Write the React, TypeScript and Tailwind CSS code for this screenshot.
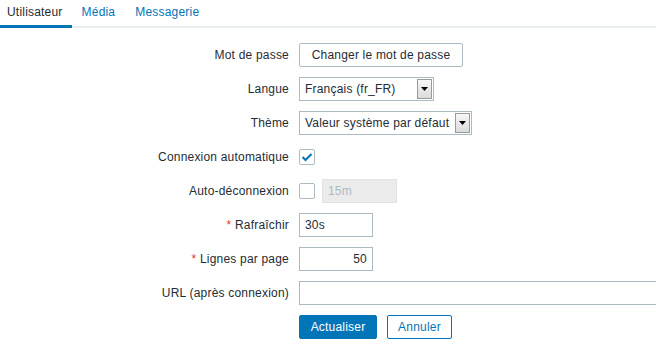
import React from "react";

function Arrow() {
  return (
    <div className="flex h-[20px] w-[15px] items-center justify-center border border-[#9a9a9a] bg-gradient-to-b from-[#f6f6f6] to-[#dcdcdc]">
      <svg width="7" height="4" viewBox="0 0 7 4">
        <path d="M0 0 L7 0 L3.5 4 Z" fill="#000" />
      </svg>
    </div>
  );
}

function Select({ value, width }: { value: string; width: string }) {
  return (
    <div className={`flex h-[24px] items-center justify-between border border-[#acbbc2] bg-white pl-[5px] pr-[1px] ${width}`}>
      <span className="whitespace-nowrap">{value}</span>
      <Arrow />
    </div>
  );
}

function Row({ label, required, children }: { label: string; required?: boolean; children: React.ReactNode }) {
  return (
    <div className="flex h-[24px] items-center">
      <div className="w-[289px] shrink-0 text-right whitespace-nowrap">
        {required && <span className="text-[#e33734]">* </span>}
        {label}
      </div>
      <div className="ml-[10px] flex min-w-0 flex-1 items-center">{children}</div>
    </div>
  );
}

export default function App() {
  return (
    <div className="h-[350px] w-[656px] overflow-hidden bg-white font-['Liberation_Sans',Arial,sans-serif] text-[12px] tracking-[0.2px] text-[#1f2c33]">
      <div className="flex border-b-2 border-[#ebeef0]">
        <div className="-mb-[2px] h-[28px] border-b-[3px] border-[#0275b8] pl-[7px] pr-[9px] leading-[25px] text-[#1f2c33]">
          Utilisateur
        </div>
        <div className="-mb-[2px] h-[28px] px-[10px] leading-[25px] text-[#0275b8]">Média</div>
        <div className="-mb-[2px] h-[28px] px-[10px] leading-[25px] text-[#0275b8]">Messagerie</div>
      </div>

      <div className="flex flex-col gap-[10px] pt-[15px]">
        <Row label="Mot de passe">
          <div className="flex h-[24px] w-[164px] items-center justify-center rounded-[2px] border border-[#acbbc2] bg-white">
            Changer le mot de passe
          </div>
        </Row>
        <Row label="Langue">
          <Select value="Français (fr_FR)" width="w-[135px]" />
        </Row>
        <Row label="Thème">
          <Select value="Valeur système par défaut" width="w-[173px]" />
        </Row>
        <Row label="Connexion automatique">
          <div className="flex h-[16px] w-[16px] items-center justify-center rounded-[2px] border border-[#acbbc2] bg-white">
            <svg width="12" height="10" viewBox="0 0 12 10">
              <path d="M1.5 5 L4.5 8 L10.5 2" fill="none" stroke="#0275b8" strokeWidth="2" />
            </svg>
          </div>
        </Row>
        <Row label="Auto-déconnexion">
          <div className="h-[16px] w-[16px] rounded-[2px] border border-[#acbbc2] bg-white" />
          <div className="ml-[7px] flex h-[24px] w-[75px] items-center border border-[#dfe4e7] bg-[#ebebeb] pl-[5px] text-[#acbbc2]">
            15m
          </div>
        </Row>
        <Row label="Rafraîchir" required>
          <div className="flex h-[24px] w-[74px] items-center border border-[#acbbc2] bg-white px-[5px]">30s</div>
        </Row>
        <Row label="Lignes par page" required>
          <div className="flex h-[24px] w-[74px] items-center justify-end border border-[#acbbc2] bg-white px-[5px]">50</div>
        </Row>
        <Row label="URL (après connexion)">
          <div className="h-[24px] w-[400px] shrink-0 border border-[#acbbc2] bg-white" />
        </Row>
        <div className="flex h-[24px] items-center pl-[299px]">
          <div className="flex h-[24px] w-[78px] items-center justify-center rounded-[2px] border border-[#0275b8] bg-[#0275b8] text-white">
            Actualiser
          </div>
          <div className="ml-[10px] flex h-[24px] w-[65px] items-center justify-center rounded-[2px] border border-[#0275b8] bg-white text-[#0275b8]">
            Annuler
          </div>
        </div>
      </div>
    </div>
  );
}
